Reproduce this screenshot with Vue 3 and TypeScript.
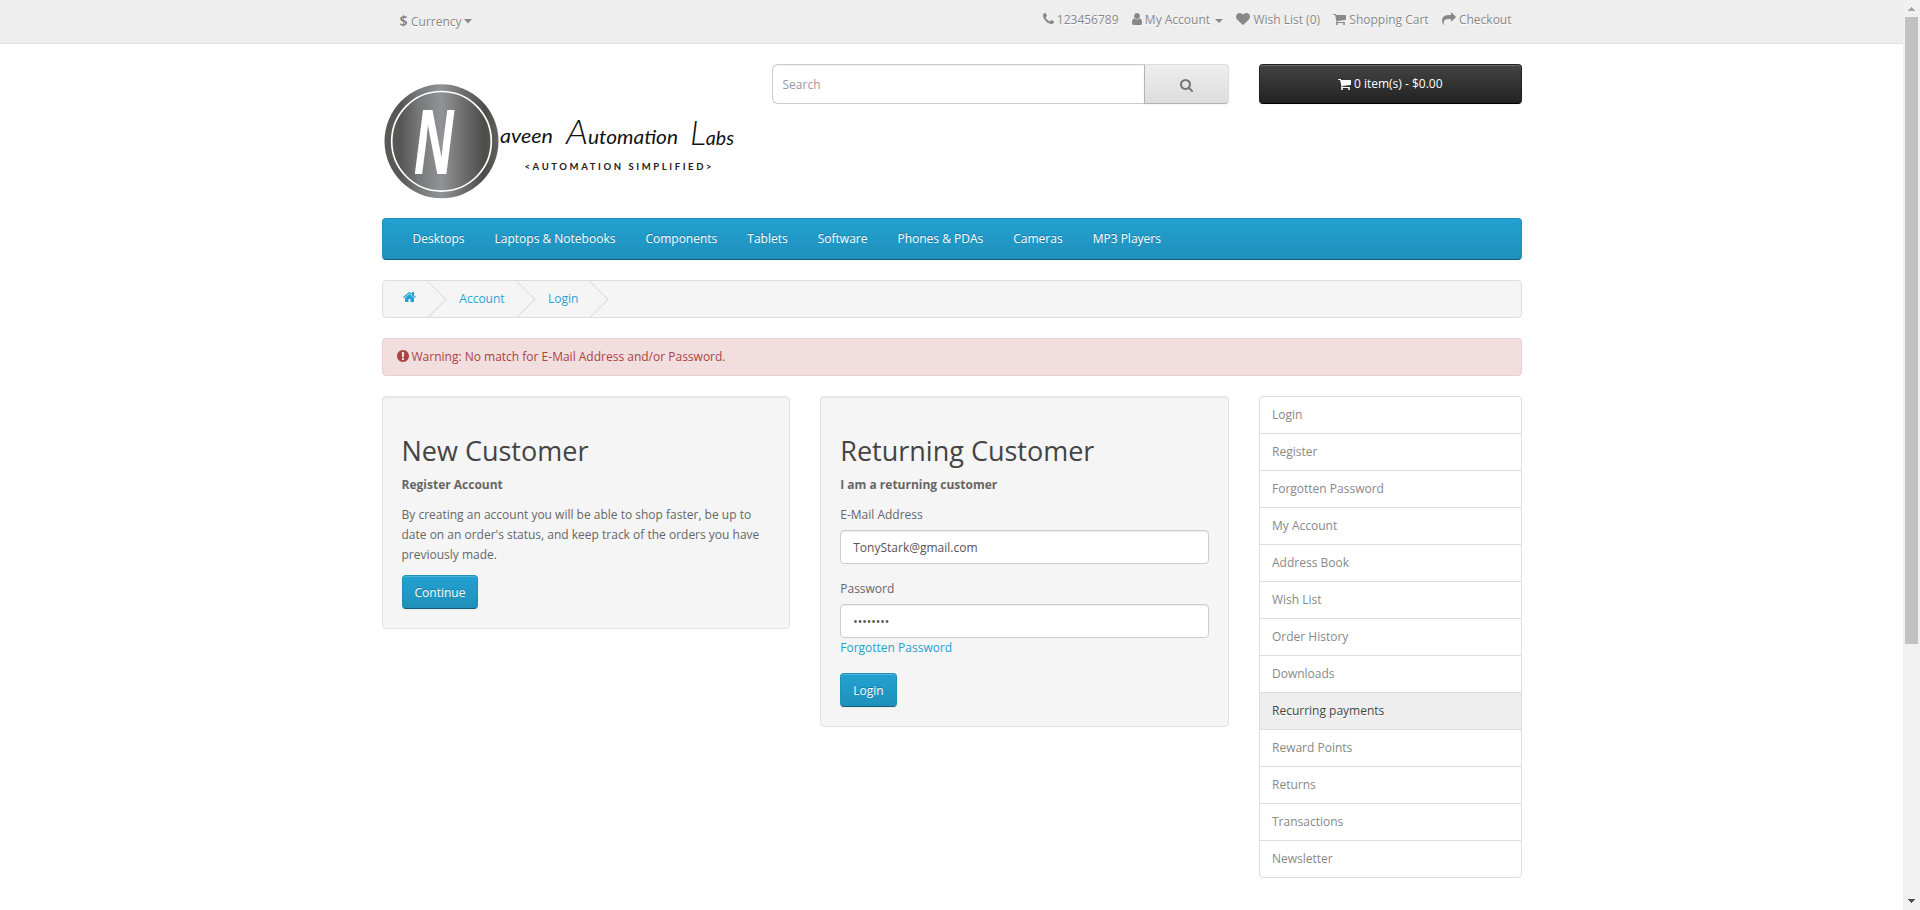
<script setup lang="ts">
import { ref } from 'vue'

interface Icon {
  box: string
  width: number
  d: string
}

const icons: Record<string, Icon> = {
  phone: {
    box: '192 0 1408 1792',
    width: 11,
    d: 'M1600 1240q0 27-10 70.500t-21 68.500q-21 50-122 106-94 51-186 51-27 0-53-3.500t-57.500-12.500-47-14.500-55.500-20.500-49-18q-98-35-175-83-127-79-264-216t-216-264q-48-77-83-175-3-9-18-49t-20.500-55.500-14.500-47-12.500-57.500-3.500-53q0-92 51-186 56-101 106-122 25-11 68.500-21t70.500-10q14 0 21 3 18 6 53 76 11 19 30 54t35 63.500 31 53.500q3 4 17.500 25t21.500 35.500 7 28.500q0 20-28.500 50t-62 55-62 53-28.500 46q0 9 5 22.500t8.500 20.500 14 24 11.500 19q76 137 174 235t235 174q2 1 19 11.500t24 14 20.500 8.500 22.500 5q18 0 46-28.500t53-62 55-62 50-28.500q14 0 28.500 7t35.500 21.500 25 17.500q25 15 53.500 31t63.500 35 54 30q70 35 76 53 3 7 3 21z',
  },
  user: {
    box: '256 0 1280 1792',
    width: 10,
    d: 'M1536 1399q0 109-62.500 187t-150.500 78h-854q-88 0-150.500-78t-62.500-187q0-85 8.500-160.500t31.500-152 58.500-131 94-89 134.500-34.500q131 128 313 128t313-128q76 0 134.500 34.500t94 89 58.500 131 31.500 152 8.500 160.500zm-256-887q0 159-112.500 271.500t-271.500 112.500-271.500-112.500-112.500-271.500 112.500-271.500 271.500-112.500 271.500 112.500 112.500 271.500z',
  },
  heart: {
    box: '0 0 1792 1792',
    width: 14,
    d: 'M896 1664q-26 0-44-18l-624-602q-10-8-27.500-26t-55.500-65.500-68-97.500-53.500-121-23.500-138q0-220 127-344t351-124q62 0 126.500 21.500t120 58 95.500 68.500 76 68q36-36 76-68t95.500-68.500 120-58 126.500-21.500q224 0 351 124t127 344q0 221-229 450l-623 600q-18 18-44 18z',
  },
  cart: {
    box: '64 0 1664 1792',
    width: 13,
    d: 'M704 1536q0 52-38 90t-90 38-90-38-38-90 38-90 90-38 90 38 38 90zm896 0q0 52-38 90t-90 38-90-38-38-90 38-90 90-38 90 38 38 90zm128-1088v512q0 24-16.500 42.500t-40.500 21.500l-1044 122q13 60 13 70 0 16-24 64h920q26 0 45 19t19 45-19 45-45 19h-1024q-26 0-45-19t-19-45q0-11 8-31.500t16-36 21.500-40 15.500-29.500l-177-823h-204q-26 0-45-19t-19-45 19-45 45-19h256q16 0 28.500 6.500t19.500 15.500 13 24.500 8 26 5.500 29.500 4.500 26h1201q26 0 45 19t19 45z',
  },
  share: {
    box: '0 0 1792 1792',
    width: 14,
    d: 'M1792 640q0 26-19 45l-512 512q-19 19-45 19t-45-19-19-45v-256h-224q-98 0-175.500 6t-154 21.500-133 42.500-105.500 69.500-80 101-48.500 138.500-17.500 181q0 55 5 123 0 6 2.500 23.500t2.500 26.500q0 15-8.500 25t-23.500 10q-16 0-28-17-7-9-13-22t-13.500-30-10.500-24q-127-285-127-451 0-199 53-333 162-403 875-403h224v-256q0-26 19-45t45-19 45 19l512 512q19 19 19 45z',
  },
  search: {
    box: '64 0 1664 1792',
    width: 13,
    d: 'M1216 832q0-185-131.500-316.500t-316.500-131.500-316.500 131.500-131.500 316.500 131.500 316.500 316.500 131.500 316.500-131.500 131.500-316.500zm512 832q0 52-38 90t-90 38q-54 0-90-38l-343-342q-179 124-399 124-143 0-273.500-55.500t-225-150-150-225-55.500-273.500 55.500-273.500 150-225 225-150 273.500-55.500 273.500 55.500 225 150 150 225 55.500 273.500q0 220-124 399l343 343q37 37 37 90z',
  },
  home: {
    box: '64 0 1664 1792',
    width: 13,
    d: 'M1472 992v480q0 26-19 45t-45 19h-384v-384h-256v384h-384q-26 0-45-19t-19-45v-480q0-1 .5-3t.5-3l575-474 575 474q1 2 1 6zm223-69l-62 74q-8 9-21 11h-3q-13 0-21-7l-692-577-692 577q-12 8-24 7-13-2-21-11l-62-74q-8-10-7-23.500t11-21.500l719-599q32-26 76-26t76 26l244 204v-195q0-14 9-23t23-9h192q14 0 23 9t9 23v408l219 182q10 8 11 21.500t-7 23.500z',
  },
  alert: {
    box: '128 0 1536 1792',
    width: 12,
    d: 'M896 128q209 0 385.500 103t279.500 279.500 103 385.500-103 385.500-279.500 279.500-385.500 103-385.500-103-279.500-279.500-103-385.500 103-385.500 279.500-279.500 385.500-103zm128 1247v-190q0-14-9-23.500t-22-9.500h-192q-13 0-23 10t-10 23v190q0 13 10 23t23 10h192q13 0 22-9.500t9-23.500zm-2-344l18-621q0-12-10-18-10-8-24-8h-220q-14 0-24 8-10 6-10 18l18 621q0 10 10 17.500t24 7.500h185q14 0 23.500-7.500t10.500-17.500z',
  },
}

const topLinks = [
  { icon: 'phone', label: '123456789', caret: false },
  { icon: 'user', label: 'My Account', caret: true },
  { icon: 'heart', label: 'Wish List (0)', caret: false },
  { icon: 'cart', label: 'Shopping Cart', caret: false },
  { icon: 'share', label: 'Checkout', caret: false },
]

const categories = [
  'Desktops', 'Laptops & Notebooks', 'Components', 'Tablets',
  'Software', 'Phones & PDAs', 'Cameras', 'MP3 Players',
]

const accountLinks = [
  'Login', 'Register', 'Forgotten Password', 'My Account', 'Address Book', 'Wish List', 'Order History',
  'Downloads', 'Recurring payments', 'Reward Points', 'Returns', 'Transactions', 'Newsletter',
]

const highlighted = ref('Recurring payments')
const search = ref('')
const email = ref('TonyStark@gmail.com')
const password = ref('password')
</script>

<template>
  <div class="window">
    <div class="page">
      <nav class="top">
        <div class="container top-inner">
          <button class="currency" type="button">
            <strong>$</strong><span>Currency</span>
            <svg class="fa-caret" width="8" height="5" viewBox="0 0 8 5"><path d="M0 0h8L4 4.500z" fill="currentColor" /></svg>
          </button>
          <ul class="top-links">
            <li v-for="link in topLinks" :key="link.label">
              <svg class="icon" :width="icons[link.icon].width" height="14" :viewBox="icons[link.icon].box"><path :d="icons[link.icon].d" /></svg>
              <span>{{ link.label }}</span>
              <i v-if="link.caret" class="caret"></i>
            </li>
          </ul>
        </div>
      </nav>

      <header class="container header">
        <svg class="logo" width="360" height="144" viewBox="0 0 360 144">
          <defs>
            <linearGradient id="disc" x1="0" x2="1" y1="0" y2="0">
              <stop offset="0" stop-color="#5a5a5a" />
              <stop offset=".14" stop-color="#565655" />
              <stop offset=".3" stop-color="#777879" />
              <stop offset=".5" stop-color="#929396" />
              <stop offset=".7" stop-color="#6c6c6c" />
              <stop offset=".88" stop-color="#4c4c4b" />
              <stop offset="1" stop-color="#626262" />
            </linearGradient>
          </defs>
          <circle cx="59.500" cy="77.300" r="57" fill="url(#disc)" />
          <circle cx="59.500" cy="77.300" r="49.800" fill="none" stroke="#fff" stroke-width="1.700" />
          <text class="logo-n" transform="translate(31.500 109.500) scale(.6 1)" x="0" y="0">N</text>
          <g class="logo-script">
            <text x="118" y="79" textLength="53" lengthAdjust="spacingAndGlyphs">aveen</text>
            <text x="184" y="80" textLength="112" lengthAdjust="spacingAndGlyphs"><tspan class="cap">A</tspan>utomation</text>
            <text x="308" y="81" textLength="44" lengthAdjust="spacingAndGlyphs"><tspan class="cap">L</tspan>abs</text>
          </g>
          <text class="logo-tag" x="142.500" y="106" textLength="187">&lt;AUTOMATION SIMPLIFIED&gt;</text>
        </svg>
        <div class="search">
          <input v-model="search" type="text" placeholder="Search" />
          <button type="button" aria-label="Search">
            <svg class="icon" width="13" height="14" :viewBox="icons.search.box"><path :d="icons.search.d" /></svg>
          </button>
        </div>
        <button class="cart" type="button">
          <svg class="icon" width="13" height="14" :viewBox="icons.cart.box"><path :d="icons.cart.d" /></svg>
          <span>0 item(s) - $0.00</span>
        </button>
      </header>

      <div class="container">
        <nav class="menu">
          <a v-for="name in categories" :key="name">{{ name }}</a>
        </nav>

        <ul class="breadcrumb">
          <li>
            <svg class="icon" width="13" height="14" :viewBox="icons.home.box"><path :d="icons.home.d" /></svg>
          </li>
          <li>Account</li>
          <li>Login</li>
        </ul>

        <div class="alert">
          <svg class="icon" width="12" height="14" :viewBox="icons.alert.box"><path :d="icons.alert.d" /></svg>
          <span>Warning: No match for E-Mail Address and/or Password.</span>
        </div>

        <div class="columns">
          <section class="well">
            <h2>New Customer</h2>
            <p><strong>Register Account</strong></p>
            <p>By creating an account you will be able to shop faster, be up to date on an order's status, and keep track of the orders you have previously made.</p>
            <button class="primary" type="button">Continue</button>
          </section>

          <section class="well">
            <h2>Returning Customer</h2>
            <p><strong>I am a returning customer</strong></p>
            <form @submit.prevent>
              <div class="group">
                <label for="email">E-Mail Address</label>
                <input id="email" v-model="email" type="text" />
              </div>
              <div class="group">
                <label for="password">Password</label>
                <input id="password" v-model="password" type="password" />
                <a class="forgot">Forgotten Password</a>
              </div>
              <button class="primary" type="submit">Login</button>
            </form>
          </section>

          <aside class="list">
            <a v-for="name in accountLinks" :key="name" :class="{ active: name === highlighted }">{{ name }}</a>
          </aside>
        </div>
      </div>
    </div>

    <div class="scrollbar">
      <svg class="arrow" width="7" height="4" viewBox="0 0 7 4"><path d="M0 4V3h1V2h1V1h1V0h1v1h1v1h1v1h1v1z" fill="#a3a3a3" /></svg>
      <div class="thumb"></div>
      <svg class="arrow down" width="7" height="4" viewBox="0 0 7 4"><path d="M0 0v1h1v1h1v1h1v1h1V3h1V2h1V1h1V0z" fill="#505050" /></svg>
    </div>
  </div>
</template>

<style>
body {
  margin: 0;
  overflow: hidden;
}
</style>

<style scoped>
* {
  box-sizing: border-box;
}
.window {
  display: flex;
  width: 1920px;
  height: 910px;
  overflow: hidden;
  background: #fff;
  color: #666;
  font: 400 12px/20px 'Open Sans', 'Liberation Sans', sans-serif;
}
.page {
  width: 1903px;
}
.container {
  width: 1140px;
  margin: 0 auto;
}
.icon {
  display: block;
  flex: none;
  fill: currentColor;
}
button,
input {
  font: inherit;
}
button {
  margin: 0;
}
ul {
  margin: 0;
  padding: 0;
  list-style: none;
}

.top {
  height: 44px;
  background: #eee;
  border-bottom: 1px solid #e2e2e2;
  color: #888;
  text-shadow: 0 1px 0 #fff;
}
.top-inner {
  display: flex;
  justify-content: space-between;
  padding: 0 10px 0 18px;
}
.currency {
  display: flex;
  align-items: center;
  height: 43px;
  padding: 0;
  border: 0;
  background: none;
  color: inherit;
  text-shadow: inherit;
}
.currency strong {
  width: 11.500px;
  margin-top: -2px;
  font-size: 14px;
  line-height: 20px;
  text-align: left;
}
.currency .fa-caret {
  margin-left: 2px;
}
.top-links {
  display: flex;
  gap: 13.300px;
  padding-top: 10px;
}
.top-links li {
  display: flex;
  height: 20px;
  gap: 3px;
}
.top-links .icon {
  margin-top: 2px;
}
.caret {
  width: 8px;
  height: 4px;
  margin: 9px 0 0 2px;
  border: 4px solid transparent;
  border-top-color: currentColor;
  border-bottom: 0;
}

.header {
  display: grid;
  grid-template-columns: 360px 457.500px 262.500px;
  gap: 30px;
  height: 144px;
  margin-top: 20px;
  margin-bottom: 10px;
}
.logo {
  display: block;
}
.logo-n {
  font: italic 700 90px 'Open Sans', sans-serif;
  fill: #fff;
}
.logo-script {
  font: italic 400 19px Lato, sans-serif;
  fill: #111;
}
.logo-script .cap {
  font-size: 33px;
  font-weight: 300;
}
.logo-tag {
  font: 700 9.500px Lato, sans-serif;
  fill: #222;
}
.search {
  display: flex;
  height: 40px;
}
.search input {
  flex: 1;
  min-width: 0;
  padding: 2px 10px 0;
  border: 1px solid #ccc;
  border-right: 0;
  border-radius: 6px 0 0 6px;
  box-shadow: inset 0 1px 1px rgba(0, 0, 0, 0.075);
  outline: 0;
  color: #555;
}
.search input::placeholder {
  color: #999;
}
.search button {
  display: flex;
  align-items: center;
  justify-content: center;
  width: 85px;
  padding: 2px 0 0;
  border: 1px solid #ddd;
  border-bottom-color: #b3b3b3;
  border-left-color: #b3b3b3;
  border-radius: 0 4px 4px 0;
  background: linear-gradient(#eee, #ddd);
  box-shadow: 0 1px 2px rgba(0, 0, 0, 0.05);
  color: #777;
}
.cart {
  display: flex;
  align-items: center;
  justify-content: center;
  gap: 3px;
  height: 40px;
  padding: 0;
  border: 1px solid #222;
  border-color: #222 #222 #000;
  border-radius: 4px;
  background: linear-gradient(#444, #222);
  box-shadow: inset 0 1px 0 rgba(255, 255, 255, 0.2), 0 1px 2px rgba(0, 0, 0, 0.05);
  color: #fff;
}
.cart .icon {
  margin-top: -1px;
}

.menu {
  display: flex;
  height: 42px;
  padding: 10px 15px;
  border: 1px solid #1f90bb;
  border-bottom-color: #145e7a;
  border-radius: 4px;
  background: linear-gradient(#23a1d1, #1f90bb);
  color: #fff;
  text-shadow: 0 -1px 0 rgba(0, 0, 0, 0.25);
}
.menu a {
  padding: 0 15px;
}

.breadcrumb {
  display: flex;
  gap: 3.300px;
  height: 38px;
  margin: 20px 0;
  padding: 8px 0;
  overflow: hidden;
  border: 1px solid #ddd;
  border-radius: 4px;
  background: #f5f5f5;
  color: #23a1d1;
  text-shadow: 0 1px 0 #fff;
}
.breadcrumb li {
  position: relative;
  padding: 0 20px;
}
.breadcrumb li:first-child {
  padding-right: 20.500px;
}
.breadcrumb .icon {
  margin-top: 1px;
}
.breadcrumb li::after {
  content: '';
  position: absolute;
  top: -3px;
  right: -5px;
  width: 26px;
  height: 26px;
  border-right: 1px solid #ddd;
  border-bottom: 1px solid #ddd;
  transform: rotate(-45deg);
}

.alert {
  display: flex;
  gap: 3px;
  height: 38px;
  margin-bottom: 20px;
  padding: 8px 14px;
  border: 1px solid #ebccd1;
  border-radius: 4px;
  background: #f2dede;
  color: #a94442;
}
.alert .icon {
  margin-top: 2px;
}

.columns {
  display: grid;
  grid-template-columns: 408.750px 408.750px 262.500px;
  gap: 30px;
  align-items: start;
}
.well {
  padding: 19px;
  border: 1px solid #e3e3e3;
  border-radius: 4px;
  background: #f5f5f5;
  box-shadow: inset 0 1px 1px rgba(0, 0, 0, 0.05);
}
.well h2 {
  margin: 20px 0 10px;
  color: #444;
  font-size: 27px;
  font-weight: 400;
  line-height: 29px;
}
.well p {
  margin: 0 0 10px;
}
.group {
  margin-bottom: 15px;
}
.group label {
  display: block;
  margin-bottom: 5px;
}
.group input {
  display: block;
  width: 100%;
  height: 34px;
  padding: 0 12px;
  border: 1px solid #ccc;
  border-radius: 4px;
  outline: 0;
  background: #fff;
  box-shadow: inset 0 1px 1px rgba(0, 0, 0, 0.075);
  color: #555;
}
.forgot {
  display: block;
  margin-bottom: 15px;
  color: #23a1d1;
}
.primary {
  display: block;
  height: 34px;
  padding: 2px 12px 0;
  border: 1px solid #1f90bb;
  border-bottom-color: #145e7a;
  border-radius: 4px;
  background: linear-gradient(#23a1d1, #1f90bb);
  box-shadow: inset 0 1px 0 rgba(255, 255, 255, 0.2), 0 1px 2px rgba(0, 0, 0, 0.05);
  color: #fff;
  text-shadow: 0 -1px 0 rgba(0, 0, 0, 0.25);
}
.list {
  overflow: hidden;
  border: 1px solid #ddd;
  border-radius: 4px;
  color: #888;
}
.list a {
  display: block;
  padding: 8px 12px;
}
.list a + a {
  border-top: 1px solid #ddd;
}
.list .active {
  background: #eee;
  color: #444;
  text-shadow: 0 1px 0 #fff;
}

.scrollbar {
  display: flex;
  flex-direction: column;
  align-items: center;
  width: 17px;
  padding: 7px 0;
  background: #f1f1f1;
}
.arrow {
  display: block;
}
.thumb {
  width: 13px;
  height: 627px;
  margin-top: 6px;
  background: #c1c1c1;
}
.down {
  margin-top: auto;
}
</style>
